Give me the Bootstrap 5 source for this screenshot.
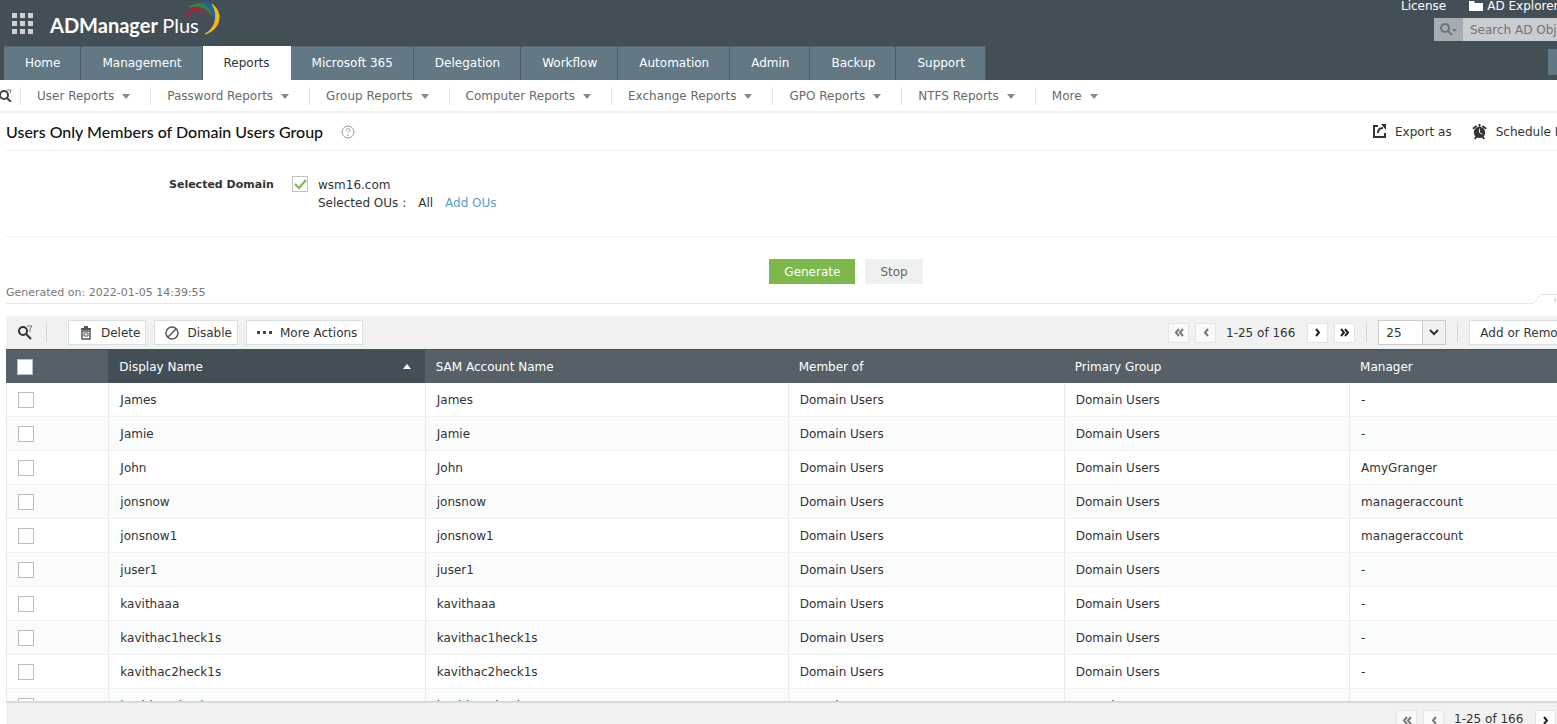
<!DOCTYPE html>
<html lang="en">
<head>
<meta charset="utf-8">
<meta name="viewport" content="width=device-width, initial-scale=1">
<title>ADManager Plus</title>
<link href="https://cdn.jsdelivr.net/npm/bootstrap@5.3.0/dist/css/bootstrap.min.css" rel="stylesheet">
<style>
body{font:12px/18px "DejaVu Sans",Verdana,sans-serif;color:#333;background:#fff}
a{color:inherit;text-decoration:none}
svg{flex:none;display:block}
.topbar{background:#434f57;color:#fff;height:80px}
.apps{margin-left:12px}
.brand{font:700 20px/28px Lato,sans-serif;color:#fff;padding-left:17px}
.brand span{font-weight:400}
.arc{margin:0 0 0 -18px}
.tools{flex:0 0 156px;min-width:0}
.tools .top a{line-height:12px}
.tools .top .sep{height:12px;margin:0 10px 0 9px}
.toolsearch{height:23px;margin:6px 0 0 33px}
.toolsearch button{flex:none;width:29px;border:0;padding:0 0 0 6px;background:#a6adb2;color:#6b757c}
.toolsearch input{flex:none;width:200px;border:0;border-radius:0;background:#c9cdd0;padding:0 7px;color:#333;font-size:12px}
.toolsearch input::placeholder{color:#6f7478;opacity:1}
.tabs{height:34px;margin-left:4px}
.tabs a{background:#627884;color:#fff;padding:8px 20px 8px 21px;border-right:1px solid #4b5c66;border-top:1px solid #566872;line-height:17px}
.tabs a.active{background:#fff;color:#333;border-color:#fff}
.sidebox{width:9px;height:26px;margin-top:3px;background:#627884}
.subnav{height:33px;border-bottom:2px solid #f2f2f2;color:#6a6a6a}
.subnav a{height:18px;border-left:1px solid #e2e2e2;padding:0 20px 0 16px;display:flex;align-items:center;gap:8px}
.caret{border:4px solid transparent;border-top:5px solid #888;border-bottom:0;margin-top:2px}
.titlebar{height:38px;border-bottom:1px solid #efefef;margin-left:6px}
.titlebar h1{font:500 16px/20px Lato,sans-serif;color:#111;margin:0 18px 0 0}
.exports{flex:0 0 185px;min-width:0;color:#333}
.exports a{margin:0 20px 0 8px}
.domain{margin-left:6px;padding:25px 0 24px 163px;border-bottom:1px solid #efefef}
.domain strong{font-size:11px;width:123px}
.domain .ous{padding-left:10px}
.ous span{margin-right:12px}
.link{color:#5a9bcb}
.chk{appearance:none;width:16px;height:16px;border:1px solid #bbb;background:#fff;margin:0;display:block}
.chk.green:checked{border:1px solid #bcc2c5;background:#fff url("data:image/svg+xml,%3Csvg xmlns='http://www.w3.org/2000/svg' viewBox='0 0 14 14'%3E%3Cpath d='M2 7l4 4 7-8' fill='none' stroke='%2377b843' stroke-width='2'/%3E%3C/svg%3E")}
.actions{padding:22px 0 0 135px}
.act{border:0;height:25px;font-size:12px;line-height:16px;padding:0 15px}
.act+.act{margin-left:10px}
.go{background:#7cb84b;color:#fff}
.stop{background:#eef0f0;color:#666}
.genrow{margin:0 0 12px 6px}
.genline{font-size:11px;line-height:18px;height:20px;color:#777;border-bottom:1px solid #e8e8e8}
.toolbar{background:#f1f1f1;margin-left:6px;height:33px}
.toolbar .find{margin:0 6px 0 8px}
.tb{background:#fff;border:1px solid #dcdfe0;height:25px;padding:0 5px 0 10px;color:#333;line-height:16px;white-space:nowrap}
.pager>*{flex:none}
.pg{background:#fff;border:1px solid #e4e4e4;width:21px;height:20px;padding:0}
.pg:disabled{background:#fafafa}
.pg+.pg{margin-left:6px}
.count{padding:0 12px 0 10px}
.sep{width:1px;height:19px;background:#d4d4d4}
.toolbar .find+.sep{margin-right:21px}
.pager .sep{margin:0 11px}
.size{appearance:none;width:68px;height:25px;border:1px solid #ccc;border-radius:0;font-size:12px;padding:0 7px;color:#333;background:linear-gradient(90deg,#fff 43px,#ccc 43px,#ccc 44px,#f1f1f1 44px)}
.sizewrap svg{position:absolute;right:7px;top:9px;pointer-events:none}
.pager{flex:0 0 389px;min-width:0}
.gridwrap{margin-left:6px;flex:1 1 0;min-height:0}
.users{table-layout:fixed;width:100%;border-collapse:separate;border-spacing:0}
.users th{background:#556068;color:#fff;font-weight:400;height:34px;padding:0 12px 0 11px;border-top:1px solid #465158}
.users th.sorted{background:#434f57}
.users td{height:34px;padding:0 11px;border-bottom:1px solid #f0f1f1;border-left:1px solid #e9ebeb}
.users tbody tr:nth-child(even) td{background:#fafbfb}
.up{border:4px solid transparent;border-bottom:5px solid #fff;border-top:0;margin-right:2px}
.foot{background:#f1f1f1;margin-left:6px;border-top:2px solid #d9dbdb;height:23px;padding-top:7px}
.foot .pager{flex-basis:161px}
</style>
</head>
<body class="d-flex flex-column vh-100 overflow-hidden text-nowrap">
<header class="topbar d-flex flex-column flex-shrink-0">
  <div class="d-flex flex-fill">
    <button class="apps btn p-0 border-0" aria-label="Apps"><svg width="21" height="21" viewBox="0 0 21 21" fill="#cdd1d4"><path d="M0 0h5v5H0zM8 0h5v5H8zM16 0h5v5h-5zM0 8h5v5H0zM8 8h5v5H8zM16 8h5v5h-5zM0 16h5v5H0zM8 16h5v5H8zM16 16h5v5h-5z"/></svg></button>
    <a href="#" class="brand align-self-center mt-1">ADManager <span>Plus</span></a>
    <svg class="arc" width="40" height="38" viewBox="0 0 40 38" fill="none">
      <path d="M5 17C8 6 19 6 26 14C19 8 10 9 5 17Z" fill="#b71c3a" stroke="#b71c3a"/>
      <path d="M8 7C18 0 29 5 31 16C26 8 20 5 8 7Z" fill="#3c8046" stroke="#3c8046"/>
      <path d="M20 3C32 0 37 12 33 22C33 11 30 5 20 3Z" fill="#1d66ad" stroke="#1d66ad"/>
      <path d="M31 4C43 13 39 30 24 34C35 28 38 15 31 4Z" fill="#f1bc14" stroke="#f1bc14"/>
    </svg>
    <div class="tools ms-auto overflow-hidden">
      <div class="top d-flex align-items-start">
        <a href="#">License</a>
        <span class="sep opacity-25"></span>
        <svg class="ms-1 me-1" width="14" height="12" viewBox="0 0 14 12"><path d="M0 1h5l1 2h8v8H0z" fill="#fff"/></svg>
        <a href="#">AD Explorer</a>
      </div>
      <form class="toolsearch d-flex">
        <button type="button" aria-label="Search"><svg width="18" height="14" viewBox="0 0 18 14" fill="none" stroke="currentColor" stroke-width="2"><circle cx="5" cy="5" r="4"/><path d="M8 8l4 4"/><path d="M12 6h5l-2.500 3z" fill="currentColor" stroke="none"/></svg></button>
        <input type="text" placeholder="Search AD Objects" aria-label="Search AD Objects">
      </form>
    </div>
  </div>
  <div class="d-flex justify-content-between">
    <nav class="tabs d-flex"><a href="#">Home</a><a href="#">Management</a><a href="#" class="active">Reports</a><a href="#">Microsoft 365</a><a href="#">Delegation</a><a href="#">Workflow</a><a href="#">Automation</a><a href="#">Admin</a><a href="#">Backup</a><a href="#">Support</a></nav>
    <div class="sidebox"></div>
  </div>
</header>
<nav class="subnav d-flex align-items-center flex-shrink-0">
  <svg width="20" height="13" viewBox="0 0 20 13" fill="none" stroke="#444" stroke-width="2"><circle cx="4" cy="6" r="4"/><path d="M7 9l4 4"/><path d="M7 1h4l-1 3" stroke="#777" stroke-width="1"/></svg>
  <a href="#">User Reports <i class="caret"></i></a><a href="#">Password Reports <i class="caret"></i></a><a href="#">Group Reports <i class="caret"></i></a><a href="#">Computer Reports <i class="caret"></i></a><a href="#">Exchange Reports <i class="caret"></i></a><a href="#">GPO Reports <i class="caret"></i></a><a href="#">NTFS Reports <i class="caret"></i></a><a href="#">More <i class="caret"></i></a>
</nav>
<section class="titlebar d-flex align-items-center flex-shrink-0">
  <h1>Users Only Members of Domain Users Group</h1>
  <svg width="14" height="14" viewBox="0 0 14 14" fill="none" stroke="#999"><circle cx="7" cy="7" r="6"/><path d="M5 6c0-3 4-3 4-1 0 1.500-2 1.500-2 3M7 9v2"/></svg>
  <div class="exports ms-auto d-flex align-items-center overflow-hidden">
    <svg width="15" height="15" viewBox="0 0 15 15" fill="none" stroke="#333" stroke-width="2"><path d="M6 2H2v11h11V9"/><path d="M6 9c0-3 2-5 5-5"/><path d="M9 0h5v6z" fill="#333" stroke="none"/></svg>
    <a href="#">Export as</a>
    <svg width="16" height="16" viewBox="0 0 17 17"><circle cx="8" cy="9" r="6" fill="#333"/><path d="M1 5l4-3M15 5l-4-3M8 0v3M3 16l2-3M13 16l-2-3" stroke="#333" stroke-width="2"/><path d="M8 5v4l3 2" stroke="#fff" fill="none"/></svg>
    <a href="#">Schedule Reports</a>
  </div>
</section>
<section class="domain d-flex flex-shrink-0">
  <strong>Selected Domain</strong>
  <input type="checkbox" class="chk green" id="dom" checked>
  <div class="ous"><label for="dom" class="d-block">wsm16.com</label><span>Selected OUs :</span><span>All</span><a href="#" class="link">Add OUs</a></div>
</section>
<div class="actions d-flex justify-content-center flex-shrink-0">
  <button class="act go">Generate</button><button class="act stop">Stop</button>
</div>
<div class="genrow d-flex align-items-end flex-shrink-0"><div class="genline flex-fill">Generated on: 2022-01-05 14:39:55</div><svg width="24" height="10" viewBox="0 0 24 10" fill="none" stroke="#e2e2e2"><path d="M0 9.500L8 .500H24"/><path d="M22 4v4" stroke="#bbb"/></svg></div>
<div class="toolbar d-flex align-items-center flex-shrink-0">
  <svg class="find" width="26" height="16" viewBox="0 0 26 16" fill="none" stroke="#333" stroke-width="2"><circle cx="9" cy="6" r="4"/><path d="M12 9l5 5"/><path d="M13 1h5l-2 3v3" stroke="#777" stroke-width="1"/></svg>
  <span class="sep"></span>
  <button class="tb d-flex align-items-center"><svg class="me-2" width="14" height="14" viewBox="-1 0 14 14" fill="none" stroke="#555"><path d="M1 3h10M4 1h4" stroke-width="2"/><path d="M2 5h8v8H2z" stroke-width="1.500"/><path d="M4 7h4v3H4z"/></svg>Delete</button>
  <button class="tb d-flex align-items-center ms-2"><svg class="me-2" width="14" height="14" viewBox="0 0 14 14" fill="none" stroke="#555" stroke-width="1.500"><circle cx="7" cy="7" r="6"/><path d="M3 11l8-8"/></svg>Disable</button>
  <button class="tb d-flex align-items-center ms-2"><svg class="me-2" width="15" height="4" viewBox="0 0 15 4" fill="#444"><path d="M0 0h3v3H0zM6 0h3v3H6zM12 0h3v3h-3z"/></svg>More Actions</button>
  <div class="pager ms-auto d-flex align-items-center overflow-hidden">
    <button class="pg" disabled aria-label="First"><svg class="mx-auto" width="10" height="9" viewBox="0 0 10 9" fill="none" stroke="#777" stroke-width="2"><path d="M5 1L2 4.500 5 8M9 1L6 4.500 9 8"/></svg></button>
    <button class="pg" disabled aria-label="Previous"><svg class="mx-auto" width="6" height="9" viewBox="0 0 6 9" fill="none" stroke="#777" stroke-width="2"><path d="M5 1L2 4.500 5 8"/></svg></button>
    <span class="count">1-25 of 166</span>
    <button class="pg" aria-label="Next"><svg class="mx-auto" width="6" height="9" viewBox="0 0 6 9" fill="none" stroke="#222" stroke-width="2"><path d="M1 1l3 3.500L1 8"/></svg></button>
    <button class="pg" aria-label="Last"><svg class="mx-auto" width="10" height="9" viewBox="0 0 10 9" fill="none" stroke="#222" stroke-width="2"><path d="M1 1l3 3.500L1 8M5 1l3 3.500L5 8"/></svg></button>
    <span class="sep"></span>
    <div class="sizewrap position-relative"><select class="size" aria-label="Rows per page"><option>25</option><option>50</option></select><svg width="10" height="7" viewBox="0 0 10 7" fill="none" stroke="#333" stroke-width="2"><path d="M1 1l4 4 4-4"/></svg></div>
    <span class="sep"></span>
    <button class="tb">Add or Remove Columns</button>
  </div>
</div>
<main class="gridwrap overflow-hidden">
<table class="users">
<colgroup><col style="width:6.6%"><col style="width:20.4%"><col style="width:23.4%"><col style="width:17.8%"><col style="width:18.4%"><col></colgroup>
<thead><tr><th><input type="checkbox" class="chk" aria-label="Select all"></th><th class="sorted"><div class="d-flex align-items-center justify-content-between">Display Name <i class="up"></i></div></th><th>SAM Account Name</th><th>Member of</th><th>Primary Group</th><th>Manager</th></tr></thead>
<tbody id="rows"></tbody>
</table>
</main>
<footer class="foot d-flex flex-shrink-0 overflow-hidden">
  <div class="pager ms-auto d-flex align-items-start overflow-hidden">
    <button class="pg" disabled aria-label="First"><svg class="mx-auto" width="10" height="9" viewBox="0 0 10 9" fill="none" stroke="#777" stroke-width="2"><path d="M5 1L2 4.500 5 8M9 1L6 4.500 9 8"/></svg></button>
    <button class="pg" disabled aria-label="Previous"><svg class="mx-auto" width="6" height="9" viewBox="0 0 6 9" fill="none" stroke="#777" stroke-width="2"><path d="M5 1L2 4.500 5 8"/></svg></button>
    <span class="count">1-25 of 166</span>
    <button class="pg" aria-label="Next"><svg class="mx-auto" width="6" height="9" viewBox="0 0 6 9" fill="none" stroke="#222" stroke-width="2"><path d="M1 1l3 3.500L1 8"/></svg></button>
  </div>
</footer>
<script src="https://cdn.jsdelivr.net/npm/bootstrap@5.3.0/dist/js/bootstrap.bundle.min.js"></script>
<script>
const users=[["James","-"],["Jamie","-"],["John","AmyGranger"],["jonsnow","manageraccount"],["jonsnow1","manageraccount"],["juser1","-"],["kavithaaa","-"],["kavithac1heck1s","-"],["kavithac2heck1s","-"],["kavithac3heck1s","-"]];
document.getElementById("rows").innerHTML=users.map(([n,m])=>`<tr><td><input type="checkbox" class="chk" aria-label="Select ${n}"></td><td>${n}</td><td>${n}</td><td>Domain Users</td><td>Domain Users</td><td>${m}</td></tr>`).join("");
</script>
</body>
</html>
